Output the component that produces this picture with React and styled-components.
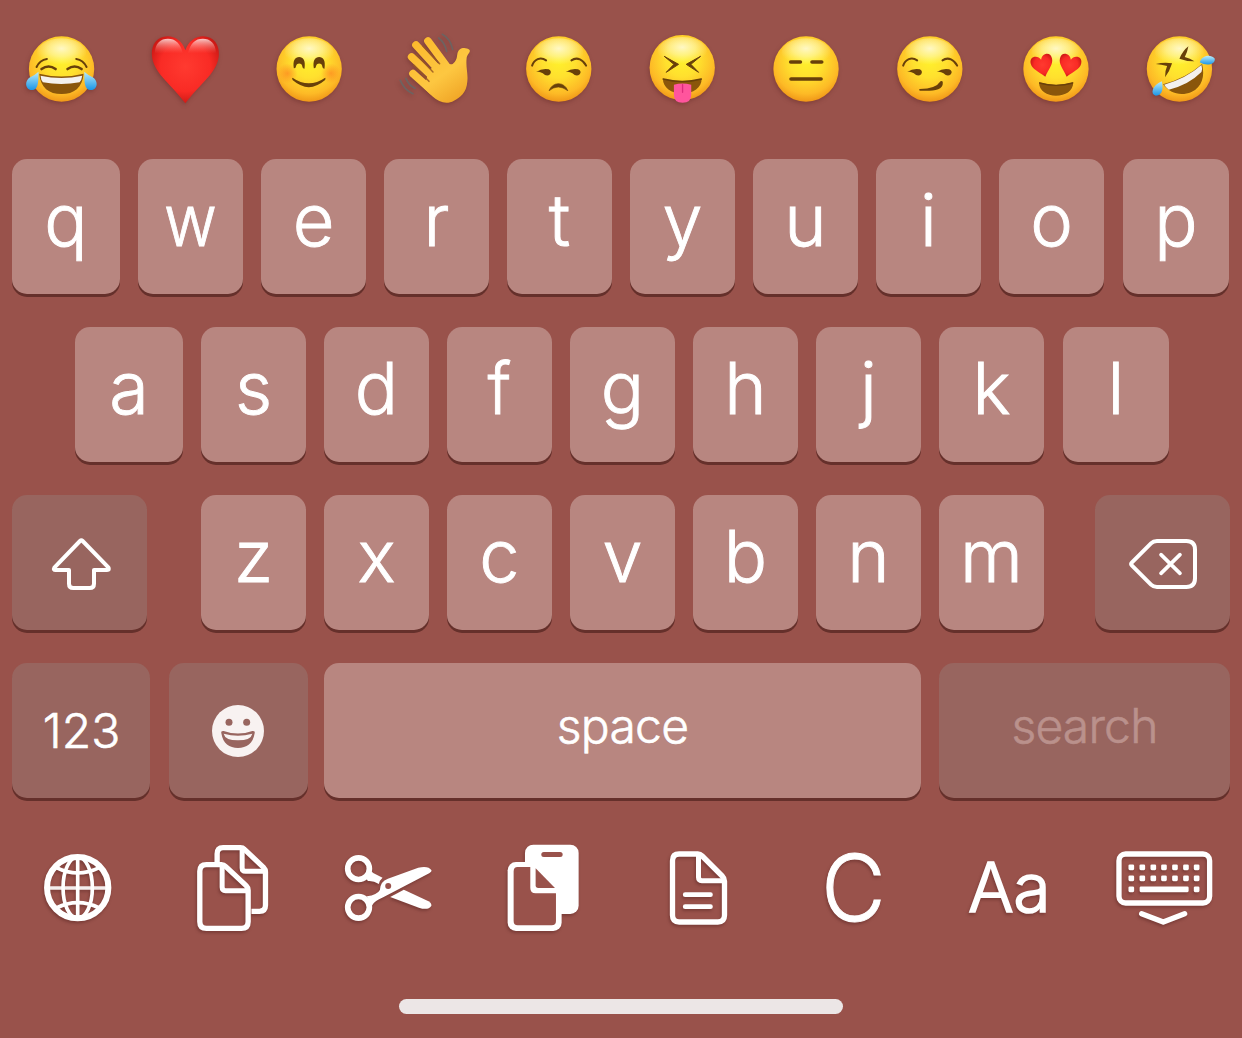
import React from "react";
import styled, { createGlobalStyle } from "styled-components";

const BG = "#99524b";
const INK = "#68400a";

const Global = createGlobalStyle`
  * { box-sizing: border-box; }
  body { margin: 0; background: ${BG}; }
`;

const Keyboard = styled.main`
  width: 1242px;
  height: 1038px;
  overflow: hidden;
  display: flex;
  flex-direction: column;
  background: ${BG};
  color: #fff;
  font-family: Inter, "Liberation Sans", sans-serif;
`;

const EmojiBar = styled.div`
  height: 159px;
  padding-top: 24px;
  display: grid;
  grid-template-columns: repeat(10, 1fr);
  justify-items: center;
  align-items: start;
`;

const EmojiSvg = styled.svg`
  width: 100px;
  height: 90px;
  display: block;
  filter: drop-shadow(-1px 2px 2px rgba(60, 10, 10, 0.25));
`;

const Rows = styled.div`
  display: flex;
  flex-direction: column;
  gap: 33px;
`;

const Row = styled.div`
  display: flex;
  gap: 18px;
  padding-left: ${(p) => p.$indent || 12}px;
`;

const Key = styled.div`
  width: ${(p) => p.$w || 105}px;
  height: 135px;
  margin-left: ${(p) => p.$ml || 0}px;
  flex: none;
  display: flex;
  justify-content: center;
  align-items: flex-start;
  border-radius: 15px;
  background: ${(p) => (p.$dark ? "#98655f" : "#b88680")};
  box-shadow: 0 3px 0 #65302b;
`;

const Letter = styled.span`
  margin-top: 25px;
  font-size: 72px;
  line-height: 72px;
  font-weight: 300;
  -webkit-text-stroke: 0.9px #fff;
  transform: scaleX(${(p) => p.$sx || 1});
`;

const Label = styled.span`
  margin-top: ${(p) => p.$top}px;
  margin-left: ${(p) => p.$shift || 0}px;
  font-size: 48px;
  line-height: 48px;
  font-weight: 300;
  -webkit-text-stroke: 0.6px currentColor;
  letter-spacing: ${(p) => p.$track || 0}px;
  color: ${(p) => (p.$dim ? "#ba918c" : "#fff")};
`;

const KeyIcon = styled.svg`
  width: 100%;
  height: 135px;
  display: block;
`;

const Tools = styled.div`
  height: 110px;
  margin-top: 35px;
  display: grid;
  grid-template-columns: repeat(8, 1fr);
  justify-items: center;
  align-items: start;
`;

const ToolSvg = styled.svg`
  width: 110px;
  height: 110px;
  display: block;
  filter: drop-shadow(-1px 2px 1.5px rgba(50, 10, 10, 0.3));
`;

const ToolText = styled.span`
  margin-top: ${(p) => p.$top}px;
  font-size: ${(p) => p.$size}px;
  line-height: ${(p) => p.$size}px;
  font-weight: 300;
  -webkit-text-stroke: ${(p) => p.$stroke}px #fff;
  stroke-linejoin: round;
  letter-spacing: ${(p) => p.$track || 0}px;
  transform: scaleX(${(p) => p.$sx || 1});
  filter: drop-shadow(-1px 2px 1.5px rgba(50, 10, 10, 0.3));
`;

const HomeIndicator = styled.div`
  width: 444px;
  height: 15px;
  margin: 56px 0 0 399px;
  border-radius: 8px;
  background: #ece6e6;
`;

function Emoji({ cx, children }) {
  return <EmojiSvg viewBox={`${cx - 150} 12 300 270`}>{children}</EmojiSvg>;
}

function Face({ x, y = 147 }) {
  return (
    <g>
      <circle cx={x} cy={y} r="98" fill="url(#face)" />
      <ellipse cx={x} cy={y - 48} rx="74" ry="44" fill="url(#shine)" />
    </g>
  );
}

function Ink({ d, w = 8 }) {
  return <path d={d} fill="none" stroke={INK} strokeWidth={w} strokeLinecap="round" strokeLinejoin="round" />;
}

const Defs = () => (
  <defs>
    <radialGradient id="face" cx="50%" cy="38%" r="64%">
      <stop offset="0" stopColor="#fff12c" />
      <stop offset="0.4" stopColor="#ffe02e" />
      <stop offset="0.78" stopColor="#fdba26" />
      <stop offset="1" stopColor="#ee9216" />
    </radialGradient>
    <radialGradient id="shine" cx="50%" cy="35%" r="55%">
      <stop offset="0" stopColor="#fffbe0" stopOpacity="0.85" />
      <stop offset="0.5" stopColor="#fffbd0" stopOpacity="0.5" />
      <stop offset="1" stopColor="#fff8b0" stopOpacity="0" />
    </radialGradient>
    <radialGradient id="heart" cx="50%" cy="45%" r="62%">
      <stop offset="0" stopColor="#ff3a30" />
      <stop offset="0.6" stopColor="#f92b25" />
      <stop offset="1" stopColor="#bf1410" />
    </radialGradient>
    <linearGradient id="gloss" x1="0" y1="0" x2="0" y2="1">
      <stop offset="0" stopColor="#fff" stopOpacity="0.75" />
      <stop offset="1" stopColor="#ff8a80" stopOpacity="0" />
    </linearGradient>
    <radialGradient id="blush">
      <stop offset="0" stopColor="#ff6a1c" stopOpacity="0.5" />
      <stop offset="1" stopColor="#ff6a1c" stopOpacity="0" />
    </radialGradient>
    <linearGradient id="tear" x1="0" y1="0" x2="0" y2="1">
      <stop offset="0" stopColor="#b9ecfb" />
      <stop offset="1" stopColor="#1b96e6" />
    </linearGradient>
    <linearGradient id="hand" gradientUnits="userSpaceOnUse" x1="100" y1="60" x2="230" y2="245">
      <stop offset="0" stopColor="#fcb92c" />
      <stop offset="0.6" stopColor="#fdc741" />
      <stop offset="1" stopColor="#f0a526" />
    </linearGradient>
  </defs>
);

const HEART = "M0 -22 C-6 -40 -20 -50 -35 -50 C-57 -50 -68 -33 -67 -13 C-65 22 -34 40 0 84 C34 40 65 22 67 -13 C68 -33 57 -50 35 -50 C20 -50 6 -40 0 -22Z";

function SideEyes({ x }) {
  return (
    <g>
      <Ink w={6} d={`M${x - 80} 137 C${x - 74} 118 ${x - 55} 109 ${x - 38} 121`} />
      <Ink w={6} d={`M${x + 38} 121 C${x + 55} 109 ${x + 74} 120 ${x + 82} 137`} />
      <path d={`M${x - 68} 156 Q${x - 50} 144 ${x - 30} 148 Q${x - 20} 154 ${x - 26} 163 Q${x - 36} 172 ${x - 48} 160 Q${x - 58} 153 ${x - 68} 156Z`} fill={INK} />
      <path d={`M${x + 21} 156 Q${x + 39} 144 ${x + 58} 148 Q${x + 70} 154 ${x + 63} 163 Q${x + 53} 172 ${x + 41} 160 Q${x + 31} 153 ${x + 21} 156Z`} fill={INK} />
    </g>
  );
}

function Emojis() {
  return (
    <EmojiBar>
      <Emoji cx={186.3}>
        <Defs />
        <Face x={185} />
        <Ink d="M110 141 Q120 120 141 117" w={6} />
        <Ink d="M229 117 Q250 120 260 141" w={6} />
        <Ink d="M125 147 Q146 132 167 147" />
        <Ink d="M203 147 Q224 132 245 147" />
        <path d="M118 161 Q184 178 251 161 C248 203 222 222 185 222 C147 222 122 203 118 161Z" fill="#8a560b" />
        <path d="M122 167 Q184 181 247 167 Q245 181 239 187 Q184 197 129 187 Q123 180 122 167Z" fill="#f4f1ee" />
        <path d="M116 155 C115 180 118 210 95 210 C79 209 72 188 87 174 Q104 166 116 155Z" fill="url(#tear)" />
        <path d="M253 155 C254 180 251 210 274 210 C290 209 297 188 282 174 Q265 166 253 155Z" fill="url(#tear)" />
      </Emoji>
      <Emoji cx={558.9}>
        <g transform="translate(557 124) scale(1.5 1.5)">
          <path d={HEART} fill="url(#heart)" />
          <path d="M-61 -16 C-61 -36 -49 -45 -35 -45 C-20 -45 -10 -36 -5 -16Z" fill="url(#gloss)" />
          <path d="M61 -16 C61 -36 49 -45 35 -45 C20 -45 10 -36 5 -16Z" fill="url(#gloss)" />
        </g>
      </Emoji>
      <Emoji cx={931.5}>
        <Face x={929} />
        <circle cx="864" cy="160" r="30" fill="url(#blush)" />
        <circle cx="994" cy="160" r="30" fill="url(#blush)" />
        <path d="M883 145 C879 121 887 111 899 111 C911 111 919 121 915 146 Q909 146 908 137 C906 128 892 128 890 137 Q889 145 883 145Z" fill={INK} />
        <path d="M943 145 C939 121 947 111 959 111 C971 111 979 121 975 146 Q969 146 968 137 C966 128 952 128 950 137 Q949 145 943 145Z" fill={INK} />
        <path d="M879 173 Q928 207 977 173 Q980 176 976 181 Q928 222 880 181 Q876 175 879 173Z" fill={INK} />
      </Emoji>
      <Emoji cx={164.1}>
        <g stroke="#6d6361" strokeWidth="5" fill="none" strokeLinecap="round">
          <path d="M186 43 Q210 56 217 88" />
          <path d="M175 54 Q193 67 199 94" />
          <path d="M77 175 Q85 196 104 205" />
          <path d="M60 181 Q72 210 98 221" />
        </g>
        <g stroke="url(#hand)" strokeWidth="23" strokeLinecap="round">
          <path d="M143 63 L200 140" />
          <path d="M107 75 L180 155" />
          <path d="M94 111 L165 178" />
          <path d="M98 161 L155 212" />
        </g>
        <path d="M146 150 L186 122 Q204 135 217 132 Q229 125 231 103 C234 82 255 80 268 90 C271 98 260 102 259 115 C256 143 264 160 261 185 C259 218 239 232 221 242 C200 254 177 248 156 229 L131 205Z" fill="url(#hand)" />
        <g stroke="#9a5a22" strokeWidth="4.5" fill="none" strokeLinecap="round" opacity="0.85">
          <path d="M128 78 L178 131" />
          <path d="M108 103 L158 156" />
          <path d="M100 135 L146 184" />
        </g>
      </Emoji>
      <Emoji cx={536.7}>
        <Face x={536} />
        <SideEyes x={536} />
        <path d="M507 212 Q515 192 535 191 Q555 192 563 212 Q534 190 507 212Z" fill={INK} stroke={INK} strokeWidth="2" strokeLinejoin="round" />
      </Emoji>
      <Emoji cx={909.3}>
        <Face x={907} y={143} />
        <path d="M853 109 L896 133 L859 157 L882 133Z" fill={INK} stroke={INK} strokeWidth="3" strokeLinejoin="round" />
        <path d="M962 109 L919 133 L956 157 L933 133Z" fill={INK} stroke={INK} strokeWidth="3" strokeLinejoin="round" />
        <path d="M849 176 Q907 192 965 176 C966 203 940 220 907 220 C874 220 849 203 849 176Z" fill="#8a560b" />
        <Ink w={5} d="M850 177 Q907 192 964 177" />
        <path d="M882 194 Q907 187 934 194 V224 Q934 248 908 248 Q882 248 882 224Z" fill="#ff559d" />
        <path d="M908 194 V217" stroke="#dd2c7c" strokeWidth="4" strokeLinecap="round" />
      </Emoji>
      <Emoji cx={201.9}>
        <Face x={199} />
        <g stroke={INK} strokeWidth="11" strokeLinecap="round">
          <path d="M153 126 H182" />
          <path d="M217 126 H246" />
          <path d="M154 177 H244" />
        </g>
      </Emoji>
      <Emoji cx={574.5}>
        <Face x={571} />
        <SideEyes x={571} />
        <path d="M541 207 Q589 207 603 184 Q610 180 610 188 C611 211 580 214 541 212 Q536 209 541 207Z" fill={INK} />
      </Emoji>
      <Emoji cx={947.1}>
        <Face x={947} />
        <path d={HEART} transform="translate(905 130) rotate(-14) scale(.49)" fill="url(#heart)" />
        <path d={HEART} transform="translate(989 130) rotate(14) scale(.49)" fill="url(#heart)" />
        <path d="M896 187 Q947 203 999 187 C998 215 975 227 947 227 C920 227 897 214 896 187Z" fill="#8a560b" />
        <Ink w={4} d="M898 189 Q947 203 997 189" />
      </Emoji>
      <Emoji cx={1319.7}>
        <Face x={1318} />
        <path d="M1247 132 Q1272 126 1296 130 Q1289 153 1275 172 Q1274 153 1281 138 Q1263 133 1247 132Z" fill={INK} />
        <path d="M1345 79 Q1328 92 1318 116 Q1342 125 1363 124 Q1350 115 1334 111 Q1342 96 1345 79Z" fill={INK} />
        <path d="M1269 193 Q1337 175 1386 132 C1395 170 1386 201 1354 216 C1321 230 1288 219 1269 193Z" fill="#8a560b" />
        <path d="M1272 194 Q1339 175 1384 135 Q1388 147 1384 156 Q1345 195 1286 209 Q1277 202 1272 194Z" fill="#f4f1ee" />
        <path d="M1379 127 C1385 107 1410 101 1424 116 C1426 132 1401 140 1379 127Z" fill="url(#tear)" />
        <path d="M1265 184 C1270 205 1268 226 1247 227 C1229 224 1236 196 1265 184Z" fill="url(#tear)" />
      </Emoji>
    </EmojiBar>
  );
}

function Tool({ cx, children }) {
  return (
    <ToolSvg viewBox={`${cx - 165} 9 330 330`} fill="none" stroke="#fff" strokeWidth="16" strokeLinecap="round" strokeLinejoin="round">
      {children}
    </ToolSvg>
  );
}

function Toolbar() {
  return (
    <Tools>
      <Tool cx={172.9}>
        <circle cx="172" cy="173" r="92" strokeWidth="18" />
        <g strokeWidth="11">
          <path d="M172 81 V265" />
          <path d="M80 174 H264" strokeOpacity="0.9" />
          <ellipse cx="172" cy="173" rx="44" ry="92" />
          <path d="M108 113 Q172 145 237 113" />
          <path d="M108 234 Q172 202 237 234" />
        </g>
      </Tool>
      <Tool cx={638.6}>
        <path d="M591 98 V72 Q591 53 609 53 H661 Q668 53 673 58 L730 112 Q736 118 736 126 V226 Q736 244 718 244 H694" strokeLinecap="butt" />
        <path d="M666 58 V114 Q666 124 676 124 H734" strokeWidth="15" />
        <path d="M559 104 H604 Q611 104 617 110 L678 167 Q684 173 684 181 V275 Q684 295 664 295 H559 Q539 295 539 275 V124 Q539 104 559 104Z" />
        <path d="M606 108 V172 Q606 182 616 182 H681" strokeWidth="15" />
      </Tool>
      <Tool cx={204.4}>
        <circle cx="116" cy="116" r="32.5" strokeWidth="17" />
        <circle cx="116" cy="232" r="32.5" strokeWidth="17" />
        <g fill="#fff" stroke="none">
          <path d="M151 121 Q154 125 160 129 L188 143 Q179 151 177 162 Q160 151 144 153 L140 146Z" />
          <path d="M141 199 Q172 195 180 180 Q181 154 204 146 L295 113 Q326 106 335 121 Q336 126 328 130 L190 202 Q163 213 156 227Z" />
          <path d="M211 201 L252 179 L326 214 Q337 220 334 228 Q325 242 297 233Z" />
        </g>
        <circle cx="205" cy="168" r="9" fill={BG} stroke="none" />
      </Tool>
      <Tool cx={670.1}>
        <g fill="#fff" stroke="none">
          <rect x="616" y="44" width="161" height="208" rx="25" />
          <rect x="564" y="96" width="162" height="207" rx="25" />
        </g>
        <g fill={BG} stroke="none">
          <rect x="665" y="66" width="64" height="15" rx="7.5" />
          <path d="M594 111 H632 V174 Q632 190 648 190 H709 V273 Q709 286 696 286 H594 Q582 286 582 273 V124 Q582 111 594 111Z" />
          <path d="M648 115 L706 174 H656 Q648 174 648 166Z" />
        </g>
      </Tool>
      <Tool cx={177.5}>
        <path d="M118 72 H174 Q181 72 187 78 L247 138 Q254 145 254 154 V256 Q254 276 234 276 H118 Q98 276 98 256 V92 Q98 72 118 72Z" />
        <path d="M176 76 V142 Q176 152 186 152 H251" strokeWidth="15" />
        <path d="M136 194 H212 M136 230 H212" strokeWidth="14" />
      </Tool>
      <ToolText $top={9} $size={92} $stroke={1} $sx={0.96}>C</ToolText>
      <ToolText $top={20} $size={68} $stroke={1.6} $track={-0.5}>Aa</ToolText>
      <Tool cx={673.1}>
        <rect x="538" y="72" width="272" height="147" rx="20" />
        <g fill="#fff" stroke="none">
          {[112, 145].map((y) =>
            [575, 608, 641, 673, 706, 739, 771].map((x) => (
              <rect key={`${x}-${y}`} x={x - 8.5} y={y - 8.5} width="17" height="17" rx="4" />
            ))
          )}
          <rect x="566.5" y="169.5" width="17" height="17" rx="4" />
          <rect x="600" y="169.5" width="147" height="17" rx="4" />
          <rect x="762.5" y="169.5" width="17" height="17" rx="4" />
        </g>
        <path d="M606 251 L671 276 L735 251" />
      </Tool>
    </Tools>
  );
}

const NARROWED = { w: 0.9, f: 0.95 };

function Letters({ keys, edges }) {
  return [...keys].map((k, i) => {
    const last = edges && i === keys.length - 1;
    return (
      <Key key={k} $w={edges && i === 0 ? 108 : last ? 106 : 105} $ml={last ? 1 : 0}>
        <Letter $sx={NARROWED[k]}>{k}</Letter>
      </Key>
    );
  });
}

export default function App() {
  return (
    <Keyboard>
      <Global />
      <Emojis />
      <Rows>
        <Row><Letters keys="qwertyuiop" edges /></Row>
        <Row $indent={75}><Letters keys="asdfghjkl" edges /></Row>
        <Row>
          <Key $dark $w={135}>
            <KeyIcon viewBox="36 30 405 405" fill="none" stroke="#fff" strokeWidth="12" strokeLinejoin="round">
              <path d="M240 168 Q244 164 248 168 L325 247 Q330 255 321 255 H282 V296 Q282 309 269 309 H220 Q207 309 207 296 V255 H167 Q159 255 163 248 Z" />
            </KeyIcon>
          </Key>
          <Key $ml={36}><Letter>z</Letter></Key>
          <Letters keys="xcvbnm" />
          <Key $dark $w={135} $ml={33}>
            <KeyIcon viewBox="525 30 405 405" fill="none" stroke="#fff" strokeWidth="12" strokeLinecap="round" strokeLinejoin="round">
              <path d="M711 168 H799 Q825 168 825 194 V280 Q825 306 799 306 H711 Q700 306 693 299 L636 242 Q631 237 636 232 L693 175 Q700 168 711 168Z" />
              <path d="M723 209 L780 265 M780 209 L723 265" strokeWidth="11" />
            </KeyIcon>
          </Key>
        </Row>
        <Row>
          <Key $dark $w={138}><Label $top={44} $shift={1}>123</Label></Key>
          <Key $dark $w={139} $ml={1}>
            <KeyIcon viewBox="507 534 417 405">
              <circle cx="714" cy="738" r="78" fill="#f8f2f1" />
              <circle cx="687" cy="712" r="10.5" fill="#98655f" />
              <circle cx="740" cy="712" r="10.5" fill="#98655f" />
              <path d="M664 745 Q662 737 671 738 Q714 753 757 738 Q766 737 764 745 C759 776 740 789 714 789 C688 789 669 776 664 745Z" fill="#98655f" />
              <path d="M671 746 Q714 758 757 746 Q753 766 714 766 Q675 766 671 746Z" fill="#f8f2f1" />
            </KeyIcon>
          </Key>
          <Key $w={597} $ml={-2}><Label $top={39} $track={-0.7}>space</Label></Key>
          <Key $dark $w={291}><Label $top={39} $track={-0.8} $dim>search</Label></Key>
        </Row>
      </Rows>
      <Toolbar />
      <HomeIndicator />
    </Keyboard>
  );
}
